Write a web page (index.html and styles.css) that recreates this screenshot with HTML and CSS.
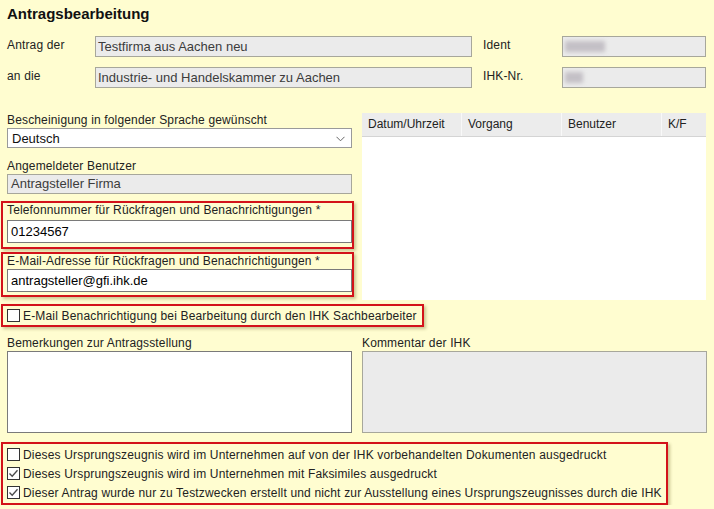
FILE: index.html
```html
<!DOCTYPE html>
<html lang="de">
<head>
<meta charset="utf-8">
<title>Antragsbearbeitung</title>
<link rel="stylesheet" href="styles.css">
</head>
<body>
<div class="page">
  <h1 class="title">Antragsbearbeitung</h1>

  <div class="head-grid">
    <div class="hlabel">Antrag der</div>
    <div class="field ro">Testfirma aus Aachen neu</div>
    <div class="hlabel hlabel-right">Ident</div>
    <div class="field ro"><span class="blur blur-ident"></span></div>

    <div class="hlabel">an die</div>
    <div class="field ro">Industrie- und Handelskammer zu Aachen</div>
    <div class="hlabel hlabel-right">IHK-Nr.</div>
    <div class="field ro"><span class="blur blur-ihk"></span></div>
  </div>

  <div class="main-grid">
    <div class="left-col">
      <div class="label">Bescheinigung in folgender Sprache gewünscht</div>
      <div class="select">
        <span>Deutsch</span>
        <svg class="chev" width="9" height="6" viewBox="0 0 9 6"><polyline points="0.5,0.8 4.5,4.8 8.5,0.8" fill="none" stroke="#666" stroke-width="1"/></svg>
      </div>
      <div class="label label-gap">Angemeldeter Benutzer</div>
      <div class="field ro field-user">Antragsteller Firma</div>

      <div class="redbox redbox-field redbox-tel">
        <div class="label">Telefonnummer für Rückfragen und Benachrichtigungen *</div>
        <div class="field edit">01234567</div>
      </div>
      <div class="redbox redbox-field redbox-mail">
        <div class="label">E-Mail-Adresse für Rückfragen und Benachrichtigungen *</div>
        <div class="field edit">antragsteller@gfi.ihk.de</div>
      </div>
    </div>

    <div class="history">
      <div class="history-head">
        <div class="hcol">Datum/Uhrzeit</div>
        <div class="hcol">Vorgang</div>
        <div class="hcol">Benutzer</div>
        <div class="hcol hcol-kf">K/F</div>
      </div>
      <div class="history-body"></div>
    </div>
  </div>

  <div class="redbox redbox-inline">
    <label class="check"><span class="box"></span><span>E-Mail Benachrichtigung bei Bearbeitung durch den IHK Sachbearbeiter</span></label>
  </div>

  <div class="remarks-grid">
    <div class="remark">
      <div class="label">Bemerkungen zur Antragsstellung</div>
      <div class="textarea"></div>
    </div>
    <div class="remark">
      <div class="label">Kommentar der IHK</div>
      <div class="textarea textarea-ro"></div>
    </div>
  </div>

  <div class="redbox redbox-checks">
    <label class="check"><span class="box"></span><span>Dieses Ursprungszeugnis wird im Unternehmen auf von der IHK vorbehandelten Dokumenten ausgedruckt</span></label>
    <label class="check"><span class="box"><svg width="11" height="11" viewBox="0 0 11 11"><polyline points="1.5,5.5 4.2,8.3 9.5,2.2" fill="none" stroke="#4a4a4a" stroke-width="1.3"/></svg></span><span>Dieses Ursprungszeugnis wird im Unternehmen mit Faksimiles ausgedruckt</span></label>
    <label class="check"><span class="box"><svg width="11" height="11" viewBox="0 0 11 11"><polyline points="1.5,5.5 4.2,8.3 9.5,2.2" fill="none" stroke="#4a4a4a" stroke-width="1.3"/></svg></span><span>Dieser Antrag wurde nur zu Testzwecken erstellt und nicht zur Ausstellung eines Ursprungszeugnisses durch die IHK</span></label>
  </div>
</div>
</body>
</html>
```

FILE: styles.css
```css
html, body {
  margin: 0;
  padding: 0;
  background: #fffdd0;
}

body {
  font-family: "Liberation Sans", Arial, sans-serif;
  font-size: 12px;
  color: #222;
}

.page {
  padding: 4px 8px 0 7px;
}

.title {
  margin: 0 0 12px 0;
  font-size: 15px;
  line-height: 20px;
  font-weight: bold;
  color: #111;
}

.head-grid {
  display: grid;
  grid-template-columns: 88px 377px 90px 144px;
  row-gap: 10px;
  align-items: start;
}

.hlabel {
  line-height: 17px;
  padding-top: 1px;
  letter-spacing: 0.15px;
}

.hlabel-right {
  padding-left: 11px;
}

.field {
  box-sizing: border-box;
  height: 21px;
  line-height: 19px;
  padding: 0 4px 0 2px;
  white-space: nowrap;
  overflow: hidden;
  font-size: 13px;
}

.ro {
  background: #ebebeb;
  border: 1px solid #a7a79b;
  color: #3c3c3c;
}

.blur {
  display: inline-block;
  height: 11px;
  margin-top: 4px;
  background: #b3aeb6;
  filter: blur(2px);
  opacity: 0.7;
}

.blur-ident {
  width: 40px;
}

.blur-ihk {
  width: 18px;
}

.main-grid {
  display: grid;
  grid-template-columns: 345px 344px;
  column-gap: 10px;
  margin-top: 25px;
  align-items: start;
}

.left-col {
  display: flex;
  flex-direction: column;
}

.label {
  line-height: 15px;
  white-space: nowrap;
  letter-spacing: 0.15px;
}

.label-gap {
  margin-top: 11px;
}

.select {
  box-sizing: border-box;
  height: 20px;
  background: #fff;
  border: 1px solid #9a9a9a;
  display: flex;
  align-items: center;
  justify-content: space-between;
  padding: 0 6px 0 4px;
  color: #111;
  font-size: 13px;
}

.chev {
  display: block;
  margin-top: 1px;
}

.field-user {
  height: 20px;
  line-height: 18px;
  padding-left: 3px;
}

.redbox {
  border: 2px solid #d3121a;
  box-shadow: 2px 2px 3px rgba(80, 70, 0, 0.3);
}

.redbox-field {
  margin: 7px -2px 0 -6px;
  padding: 0 0 4px 4px;
}

.redbox-tel .label {
  margin-bottom: 2px;
}

.redbox-mail {
  margin-top: 3px;
  padding-bottom: 3px;
}

.edit {
  height: 23px;
  line-height: 21px;
  background: #fff;
  border: 1px solid #7a7a7a;
  padding-left: 3px;
  color: #000;
}

.history {
  display: flex;
  flex-direction: column;
}

.history-head {
  display: grid;
  grid-template-columns: 100px 100px 100px 1fr;
  height: 24px;
  background: #ececec;
  border-bottom: 1px solid #d4d4d4;
  box-sizing: border-box;
}

.hcol {
  line-height: 23px;
  padding-left: 6px;
  border-right: 1px solid #f8f8f8;
  color: #222;
}

.hcol-kf {
  border-right: none;
}

.history-body {
  height: 163px;
  background: #fff;
}

.redbox-inline {
  display: flex;
  width: max-content;
  margin: 4px 0 0 -6px;
  padding: 0 5px 0 4px;
}

.check {
  display: flex;
  align-items: center;
  height: 19px;
  white-space: nowrap;
  color: #222;
  letter-spacing: 0.17px;
}

.box {
  box-sizing: border-box;
  width: 13px;
  height: 13px;
  border: 1px solid #333;
  background: #fff;
  margin-right: 3px;
  display: flex;
  align-items: center;
  justify-content: center;
  flex: none;
}

.box svg {
  display: block;
}

.remarks-grid {
  display: grid;
  grid-template-columns: 345px 345px;
  column-gap: 10px;
  margin-top: 9px;
}

.remark {
  display: flex;
  flex-direction: column;
}

.textarea {
  box-sizing: border-box;
  height: 82px;
  background: #fff;
  border: 1px solid #7a7a7a;
}

.textarea-ro {
  background: #ebebeb;
  border-color: #a7a79b;
}

.redbox-checks {
  display: flex;
  flex-direction: column;
  width: max-content;
  margin: 9px 0 0 -6px;
  padding: 1px 4px 1px 4px;
}
```
